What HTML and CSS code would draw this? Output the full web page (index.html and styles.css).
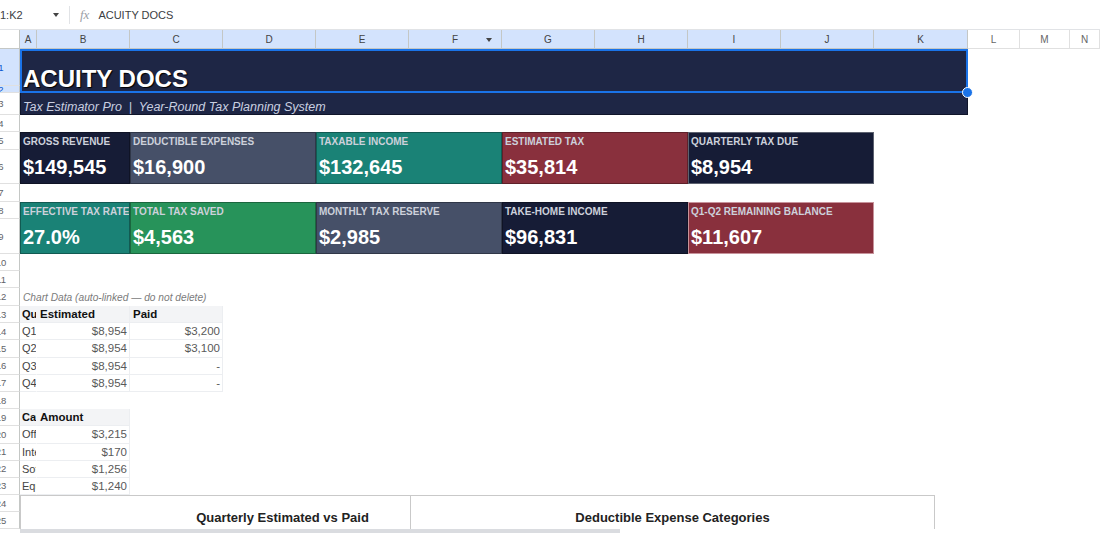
FILE: index.html
```html
<!DOCTYPE html>
<html lang="en">
<head>
    <meta charset="UTF-8">
    <meta name="viewport" content="width=device-width, initial-scale=1.0">
    <title>Acuity Docs - Tax Estimator Pro</title>
    <link rel="stylesheet" href="styles.css">
</head>
<body>
<div class="formula-bar">
    <div class="name-box"><span>1:K2</span><span class="caret"></span></div>
    <div class="fx">fx</div>
    <div class="formula">ACUITY DOCS</div>
</div>

<div class="sheet">
    <div class="corner"></div>
    <div class="col-head">A</div>
    <div class="col-head">B</div>
    <div class="col-head">C</div>
    <div class="col-head">D</div>
    <div class="col-head">E</div>
    <div class="col-head filter">F</div>
    <div class="col-head">G</div>
    <div class="col-head">H</div>
    <div class="col-head">I</div>
    <div class="col-head">J</div>
    <div class="col-head">K</div>
    <div class="col-head plain">L</div>
    <div class="col-head plain">M</div>
    <div class="col-head plain">N</div>

    <div class="row-head sel"><span>1</span></div>
    <div class="row-head sel"><span>2</span></div>
    <div class="row-head"><span>3</span></div>
    <div class="row-head"><span>4</span></div>
    <div class="row-head"><span>5</span></div>
    <div class="row-head"><span>6</span></div>
    <div class="row-head"><span>7</span></div>
    <div class="row-head"><span>8</span></div>
    <div class="row-head"><span>9</span></div>
    <div class="row-head"><span>10</span></div>
    <div class="row-head"><span>11</span></div>
    <div class="row-head"><span>12</span></div>
    <div class="row-head"><span>13</span></div>
    <div class="row-head"><span>14</span></div>
    <div class="row-head"><span>15</span></div>
    <div class="row-head"><span>16</span></div>
    <div class="row-head"><span>17</span></div>
    <div class="row-head"><span>18</span></div>
    <div class="row-head"><span>19</span></div>
    <div class="row-head"><span>20</span></div>
    <div class="row-head"><span>21</span></div>
    <div class="row-head"><span>22</span></div>
    <div class="row-head"><span>23</span></div>
    <div class="row-head"><span>24</span></div>
    <div class="row-head"><span>25</span></div>

    <!-- header band -->
    <div class="title">ACUITY DOCS</div>
    <div class="subtitle">Tax Estimator Pro &nbsp;|&nbsp; Year-Round Tax Planning System</div>

    <!-- KPI row 1 -->
    <div class="card navy k1 top-row">
        <div class="card-label">GROSS REVENUE</div>
        <div class="card-value">$149,545</div>
    </div>
    <div class="card slate k2 top-row">
        <div class="card-label">DEDUCTIBLE EXPENSES</div>
        <div class="card-value">$16,900</div>
    </div>
    <div class="card teal k3 top-row">
        <div class="card-label">TAXABLE INCOME</div>
        <div class="card-value">$132,645</div>
    </div>
    <div class="card maroon k4 top-row">
        <div class="card-label">ESTIMATED TAX</div>
        <div class="card-value">$35,814</div>
    </div>
    <div class="card navy k5 top-row edge">
        <div class="card-label">QUARTERLY TAX DUE</div>
        <div class="card-value">$8,954</div>
    </div>

    <!-- KPI row 2 -->
    <div class="card teal k1 bottom-row">
        <div class="card-label">EFFECTIVE TAX RATE</div>
        <div class="card-value">27.0%</div>
    </div>
    <div class="card green k2 bottom-row">
        <div class="card-label">TOTAL TAX SAVED</div>
        <div class="card-value">$4,563</div>
    </div>
    <div class="card slate k3 bottom-row">
        <div class="card-label">MONTHLY TAX RESERVE</div>
        <div class="card-value">$2,985</div>
    </div>
    <div class="card navy k4 bottom-row">
        <div class="card-label">TAKE-HOME INCOME</div>
        <div class="card-value">$96,831</div>
    </div>
    <div class="card maroon k5 bottom-row pink-edge">
        <div class="card-label">Q1-Q2 REMAINING BALANCE</div>
        <div class="card-value">$11,607</div>
    </div>

    <div class="chart-note">Chart Data (auto-linked — do not delete)</div>

    <div class="data quarters">
        <div class="c key head">Quarter</div>
        <div class="c head">Estimated</div>
        <div class="c head">Paid</div>
        <div class="c key">Q1</div><div class="c num">$8,954</div><div class="c num">$3,200</div>
        <div class="c key">Q2</div><div class="c num">$8,954</div><div class="c num">$3,100</div>
        <div class="c key">Q3</div><div class="c num">$8,954</div><div class="c num">-</div>
        <div class="c key">Q4</div><div class="c num">$8,954</div><div class="c num">-</div>
    </div>

    <div class="data categories">
        <div class="c key head">Category</div>
        <div class="c head">Amount</div>
        <div class="c key">Office Supplies</div><div class="c num">$3,215</div>
        <div class="c key">Internet &amp; Phone</div><div class="c num">$170</div>
        <div class="c key">Software</div><div class="c num">$1,256</div>
        <div class="c key">Equipment</div><div class="c num">$1,240</div>
    </div>

    <div class="charts">
        <div class="chart first">Quarterly Estimated vs Paid</div>
        <div class="chart second">Deductible Expense Categories</div>
    </div>
</div>

<div class="hscroll"></div>
</body>
</html>
```

FILE: styles.css
```css
body {
    margin: 0;
    width: 1100px;
    height: 533px;
    overflow: hidden;
    background: #fff;
    font-family: "Liberation Sans", Arial, sans-serif;
}

/* formula bar */
.formula-bar {
    height: 29px;
    display: flex;
    align-items: center;
    border-bottom: 1px solid #e1e3e6;
    font-size: 11px;
    color: #3c4043;
}
.name-box {
    width: 70px;
    height: 18px;
    box-sizing: border-box;
    padding-right: 10px;
    display: flex;
    align-items: center;
    justify-content: space-between;
    border-right: 1px solid #e1e3e6;
}
.caret {
    width: 0;
    height: 0;
    border-left: 3.5px solid transparent;
    border-right: 3.5px solid transparent;
    border-top: 4px solid #444;
}
.fx {
    margin-left: 10px;
    font-family: "Liberation Serif", serif;
    font-style: italic;
    font-size: 13px;
    color: #9aa0a6;
}
.formula {
    margin-left: 9px;
}

/* sheet grid */
.sheet {
    display: grid;
    grid-template-columns: 20px 17px repeat(9, 93px) 94px 52px 50px 1fr;
    grid-template-rows: 19px 37px 7px 22px 17px 18px 34px 18px 17px 35px 17px 17px 18px repeat(13, 17.2px);
}
.corner {
    border-right: 1px solid #c4c7c5;
    border-bottom: 1px solid #c4c7c5;
}
.col-head {
    background: #d3e3fd;
    border-right: 1px solid #c4c7c5;
    border-bottom: 1px solid #c4c7c5;
    font-size: 10px;
    color: #444;
    display: flex;
    align-items: center;
    justify-content: center;
    position: relative;
}
.col-head.plain {
    background: #fff;
    border-right-color: #e0e0e0;
    border-bottom-color: #e0e0e0;
    color: #666;
}
.col-head.filter::after {
    content: "";
    position: absolute;
    right: 9px;
    top: 8px;
    border-left: 3.5px solid transparent;
    border-right: 3.5px solid transparent;
    border-top: 4px solid #444;
}
.row-head {
    grid-column: 1;
    border-right: 1px solid #c4c7c5;
    border-bottom: 1px solid #e0e0e0;
    overflow: hidden;
    display: flex;
    align-items: center;
    font-size: 9.5px;
    color: #5f6368;
}
.row-head span {
    flex: none;
    width: 38px;
    margin-left: -18px;
    text-align: center;
}
.row-head.sel {
    background: #d3e3fd;
    color: #0b57d0;
}

/* header band */
.title {
    grid-column: 2 / 13;
    grid-row: 2 / 4;
    position: relative;
    background: #1e2645;
    border: 2px solid #1a73e8;
    padding-left: 1px;
    display: flex;
    align-items: flex-end;
    color: #fff;
    font-size: 24px;
    line-height: 24px;
    font-weight: bold;
    text-shadow: 1px 1px 1px #000;
}
.title::after {
    content: "";
    position: absolute;
    right: -7px;
    bottom: -7px;
    width: 9px;
    height: 9px;
    border-radius: 50%;
    background: #1a73e8;
    border: 1px solid #fff;
}
.subtitle {
    grid-column: 2 / 13;
    grid-row: 4;
    background: #1e2645;
    border: 1px solid #10152a;
    border-top: none;
    padding: 0 0 0 2px;
    display: flex;
    align-items: flex-end;
    color: #c9cfe0;
    font-size: 12.5px;
    line-height: 14px;
    font-style: italic;
}

/* KPI cards */
.card {
    display: flex;
    flex-direction: column;
    padding-left: 2px;
    border: 1px solid rgba(0, 0, 0, 0.3);
    overflow: hidden;
    white-space: nowrap;
}
.top-row { grid-row: 6 / 8; }
.bottom-row { grid-row: 9 / 11; }
.k1 { grid-column: 2 / 4; }
.k2 { grid-column: 4 / 6; }
.k3 { grid-column: 6 / 8; }
.k4 { grid-column: 8 / 10; }
.k5 { grid-column: 10 / 12; }
.card-label {
    height: 17px;
    line-height: 17px;
    font-size: 10px;
    font-weight: bold;
    color: #cdd1db;
}
.card-value {
    flex: 1;
    display: flex;
    align-items: center;
    padding-top: 1px;
    font-size: 20px;
    font-weight: bold;
    color: #fff;
}
.navy { background: #161c36; }
.slate { background: #465068; }
.teal { background: #1a8276; }
.maroon { background: #89303d; }
.green { background: #27935a; }
.edge { border-color: #5d6270; }
.pink-edge { border-color: #c7939b; }

/* chart data */
.chart-note {
    grid-column: 2 / 8;
    grid-row: 13;
    padding-left: 3px;
    display: flex;
    align-items: center;
    font-size: 10.2px;
    font-style: italic;
    color: #7b7b7b;
}
.data {
    display: grid;
    grid-auto-rows: 1fr;
}
.quarters {
    grid-column: 2 / 5;
    grid-row: 14 / 19;
    grid-template-columns: 17px 93px 93px;
}
.categories {
    grid-column: 2 / 4;
    grid-row: 20 / 25;
    grid-template-columns: 17px 93px;
}
.c {
    padding: 0 2px 0 3px;
    overflow: hidden;
    white-space: nowrap;
    font-size: 11.5px;
    line-height: 17px;
    color: #444;
    border-right: 1px solid #eceef1;
    border-bottom: 1px solid #eceef1;
}
.c.key {
    padding: 0 0 0 2px;
    font-size: 11px;
    border-right-color: transparent;
}
.c.num {
    text-align: right;
    color: #595959;
}
.c.head {
    background: #f3f4f6;
    font-weight: bold;
    color: #111;
}

/* charts */
.charts {
    grid-column: 2 / 15;
    grid-row: 25 / 27;
    display: flex;
}
.chart {
    flex: none;
    box-sizing: border-box;
    width: 525px;
    border: 1px solid #c9c9c9;
    border-bottom: none;
    background: #fff;
    padding-top: 14px;
    text-align: center;
    font-size: 13px;
    font-weight: bold;
    color: #222;
}
.chart.second {
    position: relative;
    margin-left: -135px;
}

.hscroll {
    position: fixed;
    left: 20px;
    top: 529px;
    width: 600px;
    height: 4px;
    background: #dadce0;
}
```
